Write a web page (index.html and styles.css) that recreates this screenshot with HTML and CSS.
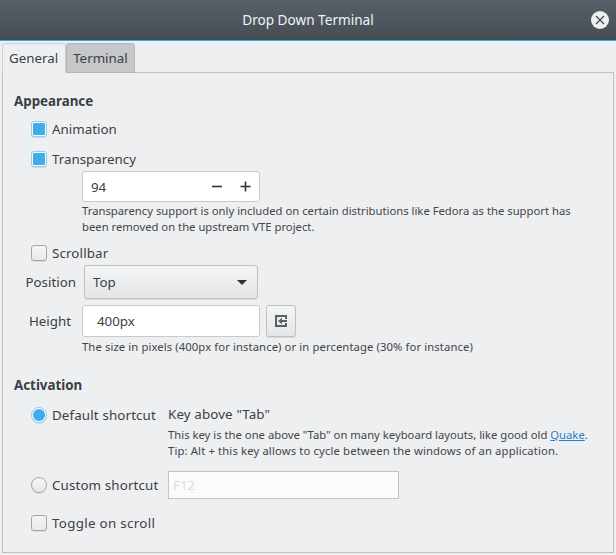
FILE: index.html
```html
<!DOCTYPE html>
<html lang="en">
<head>
<meta charset="utf-8">
<title>Drop Down Terminal</title>
<link rel="stylesheet" href="styles.css">
</head>
<body>
<div class="window">
  <header class="titlebar">
    <span class="title">Drop Down Terminal</span>
    <span class="close"><svg width="10" height="10" viewBox="0 0 10 10"><path d="M1 1l8 8M9 1l-8 8" stroke="#3c4347" stroke-width="1.1" fill="none"/></svg></span>
  </header>
  <div class="notebook">
    <div class="tabs">
      <div class="tab active">General</div>
      <div class="tab">Terminal</div>
    </div>
    <div class="page">
      <h2 class="heading">Appearance</h2>
      <div class="check-row r-animation"><span class="box on"></span><span>Animation</span></div>
      <div class="check-row r-transparency"><span class="box on"></span><span>Transparency</span></div>
      <div class="spin">
        <span class="spin-value">94</span>
        <svg class="spin-icon" width="11" height="11" viewBox="0 0 11 11"><path d="M0 5.5h10" stroke="#2e3436" stroke-width="1.6"/></svg>
        <svg class="spin-icon" width="11" height="11" viewBox="0 0 11 11"><path d="M.5 5.5h10M5.5.5v10" stroke="#2e3436" stroke-width="1.6"/></svg>
      </div>
      <p class="note n-transparency">Transparency support is only included on certain distributions like Fedora as the support has been removed on the upstream VTE project.</p>
      <div class="check-row r-scrollbar wide"><span class="box"></span><span>Scrollbar</span></div>
      <div class="field r-position">
        <span class="field-label">Position</span>
        <div class="combo"><span>Top</span><span class="arrow"></span></div>
      </div>
      <div class="field r-height">
        <span class="field-label">Height</span>
        <div class="entry">400px</div>
        <div class="icon-button">
          <svg width="12" height="12" viewBox="0 0 12 12"><path d="M0 0h12v4h-2V2H2v8h8V8h2v4H0z" fill="#5b6063"/><path d="M3 6l4-3.2V5h5v2H7v2.2z" fill="#5b6063"/></svg>
        </div>
      </div>
      <p class="note n-height">The size in pixels (400px for instance) or in percentage (30% for instance)</p>
      <h2 class="heading h-activation">Activation</h2>
      <div class="short-row r-default">
        <div class="check-row wide"><span class="radio on"></span><span>Default shortcut</span></div>
        <div class="short-body">
          <div class="key">Key above "Tab"</div>
          <p class="note n-key">This key is the one above "Tab" on many keyboard layouts, like good old <a class="link" href="#">Quake</a>.<br><span class="tip">Tip: Alt + this key allows to cycle between the windows of an application.</span></p>
        </div>
      </div>
      <div class="short-row r-custom">
        <div class="check-row wide"><span class="radio"></span><span>Custom shortcut</span></div>
        <div class="short-entry">F12</div>
      </div>
      <div class="check-row r-toggle"><span class="box"></span><span>Toggle on scroll</span></div>
    </div>
  </div>
</div>
</body>
</html>
```

FILE: styles.css
```css
* { box-sizing: border-box; }
html, body { margin: 0; padding: 0; }
body {
  width: 616px;
  height: 555px;
  overflow: hidden;
  background: #eeeff1;
  font-family: "Noto Sans", sans-serif;
  font-size: 13.33px;
  color: #3a4044;
}
.window { width: 616px; height: 555px; display: flex; flex-direction: column; }

.titlebar {
  height: 41px;
  flex: none;
  display: flex;
  align-items: center;
  justify-content: center;
  position: relative;
  background: linear-gradient(#576069, #454c52);
  border-bottom: 1px solid #33a9e8;
  color: #f2f3f3;
}
.title { font-size: 13.6px; position: relative; top: -1px; }
.close {
  position: absolute;
  right: 7px;
  top: 11px;
  width: 18px;
  height: 18px;
  border-radius: 50%;
  background: #eeeff1;
  display: flex;
  align-items: center;
  justify-content: center;
}

.notebook { margin: 2px 2px 0 2px; width: 612px; }
.tabs { display: flex; height: 30px; position: relative; z-index: 1; }
.tab {
  height: 30px;
  padding: 4px 6px 0;
  border: 1px solid #b5b6b8;
  border-radius: 3px 3px 0 0;
  background: #c6c7c9;
  line-height: 20px;
}
.tab.active {
  background: #eeeff1;
  border-color: #cfd0d2;
  border-bottom-color: #eeeff1;
  padding: 4px 7px 0 6px;
}
.page {
  margin-top: -1px;
  height: 481px;
  border: 1px solid #bfc0c2;
  padding: 18px 0 0 11px;
}

.heading { margin: 0; font-size: 13.33px; font-weight: 700; line-height: 20px; }
.h-activation { margin-top: 20px; }

.check-row { display: flex; align-items: center; gap: 5px; height: 20px; margin-left: 17px; line-height: 20px; }
.wide { letter-spacing: .14px; }
.box, .radio {
  width: 16px;
  height: 16px;
  flex: none;
  border: 1px solid #a5a7a9;
  background: linear-gradient(#f4f5f5, #e8e9ea);
  box-shadow: 0 1px 0 #d8d9da;
  border-radius: 3px;
}
.radio { border-radius: 50%; }
.box.on, .radio.on {
  border-color: #8fcdf0;
  background: #fff;
  position: relative;
}
.box.on::after {
  content: "";
  position: absolute;
  left: 1px;
  top: 1px;
  width: 12px;
  height: 12px;
  background: #3daee9;
  border-radius: 1px;
}
.radio.on::after {
  content: "";
  position: absolute;
  left: 1px;
  top: 1px;
  width: 12px;
  height: 12px;
  background: #3daee9;
  border-radius: 50%;
}
.r-animation { margin-top: 8px; }
.r-transparency { margin-top: 10px; }
.r-scrollbar { margin-top: 8px; }
.r-toggle { margin-top: 14px; letter-spacing: .32px; }

.spin {
  margin: 2px 0 0 68px;
  width: 178px;
  height: 31px;
  border: 1px solid #c9cacc;
  border-radius: 3px;
  background: #fff;
  display: flex;
  align-items: center;
  padding: 0 0 0 8px;
  gap: 17px;
}
.spin-value { flex: 1; }
.spin-icon:last-child { margin-right: 8px; }

.note { margin: 0; font-size: 11.27px; line-height: 16px; color: #3f4549; }
.n-transparency { margin: 1px 0 0 68px; width: 510px; }
.n-height { margin: 2px 0 0 68px; letter-spacing: .1px; }
.n-key { margin-top: 3px; }
.tip { letter-spacing: .14px; }

.field { display: flex; align-items: center; }
.field-label { width: 62px; text-align: right; }
.r-position { margin-top: 2px; height: 34px; }
.combo {
  margin-left: 8px;
  width: 174px;
  height: 34px;
  border: 1px solid #bfc0c2;
  border-radius: 3px;
  background: linear-gradient(#f4f5f5, #e4e5e7);
  box-shadow: 0 1px 0 #d8d9da;
  display: flex;
  align-items: center;
  justify-content: space-between;
  padding: 0 10px 0 8px;
}
.arrow {
  width: 0;
  height: 0;
  border-left: 5px solid transparent;
  border-right: 5px solid transparent;
  border-top: 5px solid #2e3436;
}
.r-height { margin-top: 6px; height: 32px; }
.r-height .field-label { width: 57px; }
.entry {
  margin-left: 11px;
  width: 178px;
  height: 32px;
  border: 1px solid #c9cacc;
  border-radius: 3px;
  background: #fff;
  padding-left: 14px;
  line-height: 30px;
}
.icon-button {
  margin-left: 6px;
  width: 30px;
  height: 32px;
  border: 1px solid #bfc0c2;
  border-radius: 3px;
  background: linear-gradient(#f4f5f5, #e4e5e7);
  box-shadow: 0 1px 0 #d8d9da;
  display: flex;
  align-items: center;
  justify-content: center;
}

.short-row { display: flex; }
.short-row .check-row { width: 137px; flex: none; }
.r-default { margin-top: 10px; }
.key { line-height: 20px; margin-top: -1px; letter-spacing: .14px; }
.r-custom { margin-top: 12px; align-items: center; height: 28px; }
.short-entry {
  width: 231px;
  height: 28px;
  border: 1px solid #c3c4c6;
  background: #fbfbfb;
  color: #dcdddf;
  padding-left: 4px;
  line-height: 26px;
  letter-spacing: 0;
}
.link { color: #2a80c0; text-decoration: underline; }
```
